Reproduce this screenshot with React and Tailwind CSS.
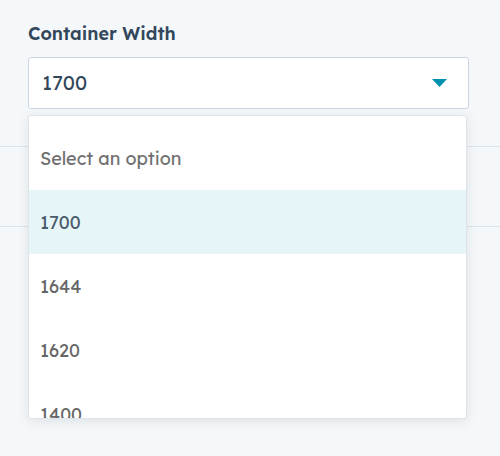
import React from 'react';

const options = ['1700', '1644', '1620', '1400'];

export default function App() {
  const selected = '1700';

  return (
    <div
      className="relative w-[500px] h-[456px] overflow-hidden bg-[#f5f8fa] text-[#33475b]"
      style={{ fontFamily: '"Lexend Deca", Inter, "Noto Sans", sans-serif' }}
    >
      <div className="pl-[28px] pr-[31px] pt-[22px]">
        <label className="block text-[18px] leading-[24px] font-semibold">Container Width</label>
        <div className="mt-[11px] h-[52px] flex items-center justify-between rounded-[3px] border border-[#cbd6e2] bg-white pl-[13px] pr-[21px]">
          <span className="text-[20px]">{selected}</span>
          <svg width="15" height="8" viewBox="0 0 15 8">
            <path d="M0 0h15L7.5 8z" fill="#0091ae" />
          </svg>
        </div>
      </div>

      {/* content behind the menu */}
      <div className="mt-[37px] border-t border-[#dfe3eb] h-[80px]" />
      <div className="border-t border-[#dfe3eb]" />

      {/* menu */}
      <div className="absolute left-[28px] top-[115px] w-[439px] h-[304px] overflow-hidden rounded-[3px] border border-[#dfe3eb] bg-white pt-[10px] shadow-[0_2px_12px_rgba(45,62,80,0.12)]">
        <div className="h-[64px] flex items-center px-[11px] text-[18px] text-[#707070]">Select an option</div>
        {options.map((o) => (
          <div
            key={o}
            className={`h-[64px] flex items-center px-[11px] text-[18px] ${
              o === selected ? 'bg-[#e5f5f8] text-[#4a5a6a]' : 'text-[#666]'
            }`}
          >
            {o}
          </div>
        ))}
      </div>
    </div>
  );
}
